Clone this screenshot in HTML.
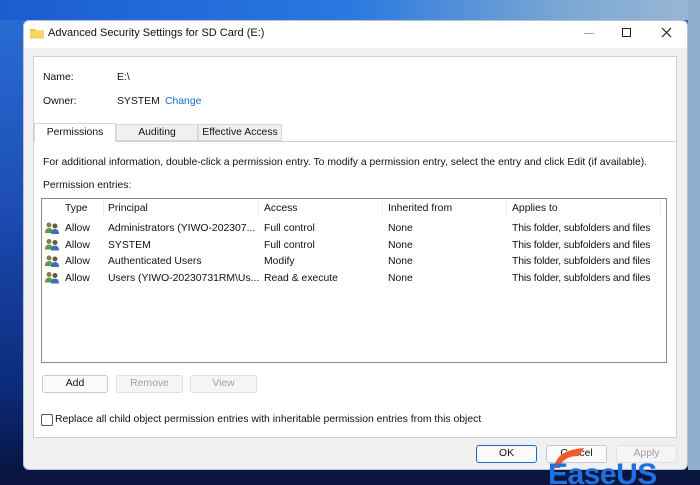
<!DOCTYPE html>
<html><head><meta charset="utf-8"><style>
*{margin:0;padding:0;box-sizing:border-box}
body{width:700px;height:485px;overflow:hidden;position:relative;font-family:"Liberation Sans",sans-serif;font-size:10.4px;color:#111;
background:linear-gradient(180deg,#2a6fd6 0%,#1d4fb8 40%,#0c2a7a 80%,#06123a 100%)}
.a{position:absolute;white-space:nowrap}
.btn{position:absolute;height:18px;border:1px solid #c8c8c8;border-radius:3px;background:#fbfbfb;text-align:center;line-height:16px}
.dis{color:#a0a0a0;background:#f5f5f5;border-color:#e0e0e0}
</style></head><body>
<div class="a" style="left:0;top:0;width:700px;height:20px;background:linear-gradient(90deg,#1b5cd0,#2a78e0 50%,#7aa6d4 80%,#9bb8d4)"></div>
<div class="a" style="left:688px;top:0;width:12px;height:470px;background:#8fb0cc"></div>
<div class="a" style="left:0;top:470px;width:700px;height:15px;background:#0a1640"></div>
<div class="a" style="left:23px;top:20px;width:665px;height:450px;background:#f0f0f0;border-radius:6px;overflow:hidden;border:1px solid #b8c4d0">
 <div class="a" style="left:0;top:0;width:665px;height:27px;background:#fff"></div>
</div>
<svg class="a" style="left:29px;top:27px" width="16" height="12"><path d="M1 2h5l1.5 1.5H15v8H1z" fill="#f3c44a"/><path d="M1 4h14v7H1z" fill="#f8d463"/></svg>
<div class="a" style="left:48px;top:27px;font-size:11px">Advanced Security Settings for SD Card (E:)</div>
<div class="a" style="left:584px;top:33px;width:10px;height:1px;background:#aaa"></div>
<div class="a" style="left:622px;top:28px;width:9px;height:9px;border:1.3px solid #222"></div>
<svg class="a" style="left:661px;top:27px" width="11" height="11"><path d="M1 1L10 10M10 1L1 10" stroke="#222" stroke-width="1.2"/></svg>
<div class="a" style="left:33px;top:56px;width:644px;height:382px;background:#fff;border:1px solid #cfcfcf"></div>
<div class="a" style="left:43px;top:72px">Name:</div>
<div class="a" style="left:117px;top:72px">E:\</div>
<div class="a" style="left:43px;top:96px">Owner:</div>
<div class="a" style="left:117px;top:96px">SYSTEM</div>
<div class="a" style="left:165px;top:96px;color:#1a6bcc">Change</div>
<div class="a" style="left:34px;top:141px;width:642px;height:1px;background:#cfcfcf"></div>
<div class="a" style="left:34px;top:123px;width:82px;height:19px;background:#fff;border:1px solid #d8d8d8;border-bottom:none;text-align:center;line-height:17px">Permissions</div>
<div class="a" style="left:116px;top:124px;width:82px;height:17px;background:#f0f0f0;border:1px solid #d8d8d8;text-align:center;line-height:15px">Auditing</div>
<div class="a" style="left:198px;top:124px;width:84px;height:17px;background:#f0f0f0;border:1px solid #d8d8d8;text-align:center;line-height:15px">Effective Access</div>
<div class="a" style="left:43px;top:157px">For additional information, double-click a permission entry. To modify a permission entry, select the entry and click Edit (if available).</div>
<div class="a" style="left:43px;top:180px">Permission entries:</div>
<div class="a" style="left:41px;top:198px;width:626px;height:165px;border:1px solid #888;background:#fff"></div>
<div class="a" style="left:65px;top:203px">Type</div>
<div class="a" style="left:108px;top:203px">Principal</div>
<div class="a" style="left:264px;top:203px">Access</div>
<div class="a" style="left:388px;top:203px">Inherited from</div>
<div class="a" style="left:512px;top:203px">Applies to</div>
<div class="a" style="left:103px;top:200px;width:1px;height:17px;background:#eee"></div>
<div class="a" style="left:258px;top:200px;width:1px;height:17px;background:#eee"></div>
<div class="a" style="left:382px;top:200px;width:1px;height:17px;background:#eee"></div>
<div class="a" style="left:506px;top:200px;width:1px;height:17px;background:#eee"></div>
<div class="a" style="left:660px;top:200px;width:1px;height:17px;background:#eee"></div>
<div class="a" style="left:0;top:221px;width:700px;line-height:16.5px">
<div class="a" style="left:65px;top:0">Allow<br>Allow<br>Allow<br>Allow</div>
<div class="a" style="left:108px;top:0">Administrators (YIWO-202307...<br>SYSTEM<br>Authenticated Users<br>Users (YIWO-20230731RM\Us...</div>
<div class="a" style="left:264px;top:0">Full control<br>Full control<br>Modify<br>Read &amp; execute</div>
<div class="a" style="left:388px;top:0">None<br>None<br>None<br>None</div>
<div class="a" style="left:512px;top:0;letter-spacing:-0.15px">This folder, subfolders and files<br>This folder, subfolders and files<br>This folder, subfolders and files<br>This folder, subfolders and files</div>
</div>
<svg class="a" style="left:45px;top:222px" width="16" height="66">
<g id="u"><circle cx="4" cy="3" r="2.5" fill="#8a7a50"/><path d="M0 11q0-5 4-5t4 5z" fill="#5a9a50"/><circle cx="10" cy="4" r="2.5" fill="#6a5a40"/><path d="M6 12q0-5 4-5t4 5z" fill="#3a70b8"/></g>
<use href="#u" y="16.5"/><use href="#u" y="33"/><use href="#u" y="49.5"/>
</svg>
<div class="btn" style="left:42px;top:375px;width:66px">Add</div>
<div class="btn dis" style="left:116px;top:375px;width:67px">Remove</div>
<div class="btn dis" style="left:190px;top:375px;width:67px">View</div>
<div class="a" style="left:41px;top:414px;width:12px;height:12px;border:1px solid #555;border-radius:2px;background:#fff"></div>
<div class="a" style="left:55px;top:414px">Replace all child object permission entries with inheritable permission entries from this object</div>
<div class="btn" style="left:476px;top:445px;width:61px;border-color:#1a6bcc">OK</div>
<div class="btn" style="left:546px;top:445px;width:61px">Cancel</div>
<div class="btn dis" style="left:616px;top:445px;width:61px">Apply</div>
<svg class="a" style="left:548px;top:442px" width="152" height="43">
<path d="M6 26q2-18 30-20l-5 8q-17 0-19 12z" fill="#f05a28"/>
<text x="0" y="42" font-family="Liberation Sans,sans-serif" font-weight="bold" font-size="30" fill="#1e6fe0" letter-spacing="-0.5">EaseUS</text>
</svg>
</body></html>
